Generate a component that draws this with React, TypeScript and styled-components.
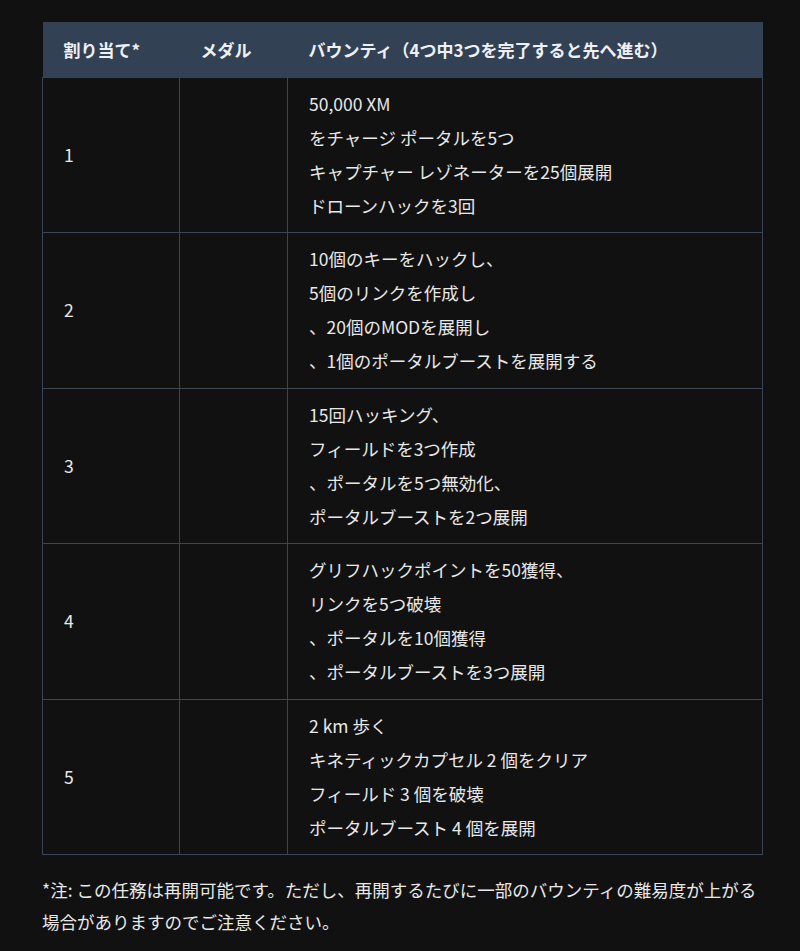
import styled, { createGlobalStyle } from "styled-components";

const GlobalStyle = createGlobalStyle`
  html, body {
    margin: 0;
    padding: 0;
    background: #111111;
  }
  body {
    font-family: "Noto Sans CJK JP", "Noto Sans", sans-serif;
    color: #e5e7eb;
  }
`;

const Page = styled.main`
  padding: 22px 38px 20px 42px;
  width: 720px;
`;

const Table = styled.table`
  width: 720px;
  border-collapse: collapse;
  table-layout: fixed;
  font-size: 17.5px;
`;

const HeadCell = styled.th`
  background: #334155;
  color: #eef0f3;
  font-weight: 700;
  font-size: 17px;
  text-align: left;
  line-height: 34px;
  padding: 10px 20px 10px 21px;
  white-space: nowrap;
  border: 1px solid #334155;
  border-right: none;
  border-left: none;
`;

const Cell = styled.td`
  border: 1px solid #3b4556;
  line-height: 34px;
  padding: 9px 20px 9.4px 21px;
  vertical-align: middle;
  color: #e8e8e8;
`;

const Line = styled.div`
  white-space: nowrap;
`;

const Note = styled.p`
  margin: 19px 0 0;
  font-size: 17.5px;
  line-height: 32px;
  color: #e8e8e8;
`;

const rows: { n: string; lines: string[] }[] = [
  {
    n: "1",
    lines: [
      "50,000 XM",
      "をチャージ ポータルを5つ",
      "キャプチャー レゾネーターを25個展開",
      "ドローンハックを3回",
    ],
  },
  {
    n: "2",
    lines: [
      "10個のキーをハックし、",
      "5個のリンクを作成し",
      "、20個のMODを展開し",
      "、1個のポータルブーストを展開する",
    ],
  },
  {
    n: "3",
    lines: [
      "15回ハッキング、",
      "フィールドを3つ作成",
      "、ポータルを5つ無効化、",
      "ポータルブーストを2つ展開",
    ],
  },
  {
    n: "4",
    lines: [
      "グリフハックポイントを50獲得、",
      "リンクを5つ破壊",
      "、ポータルを10個獲得",
      "、ポータルブーストを3つ展開",
    ],
  },
  {
    n: "5",
    lines: [
      "2 km 歩く",
      "キネティックカプセル 2 個をクリア",
      "フィールド 3 個を破壊",
      "ポータルブースト 4 個を展開",
    ],
  },
];

export default function App() {
  return (
    <>
      <GlobalStyle />
      <Page>
        <Table>
          <colgroup>
            <col style={{ width: 137 }} />
            <col style={{ width: 108 }} />
            <col style={{ width: 475 }} />
          </colgroup>
          <thead>
            <tr>
              <HeadCell>割り当て*</HeadCell>
              <HeadCell>メダル</HeadCell>
              <HeadCell>バウンティ（4つ中3つを完了すると先へ進む）</HeadCell>
            </tr>
          </thead>
          <tbody>
            {rows.map((row) => (
              <tr key={row.n}>
                <Cell>{row.n}</Cell>
                <Cell />
                <Cell>
                  {row.lines.map((line) => (
                    <Line key={line}>{line}</Line>
                  ))}
                </Cell>
              </tr>
            ))}
          </tbody>
        </Table>
        <Note>
          *注: この任務は再開可能です。ただし、再開するたびに一部のバウンティの難易度が上がる場合がありますのでご注意ください。
        </Note>
      </Page>
    </>
  );
}
